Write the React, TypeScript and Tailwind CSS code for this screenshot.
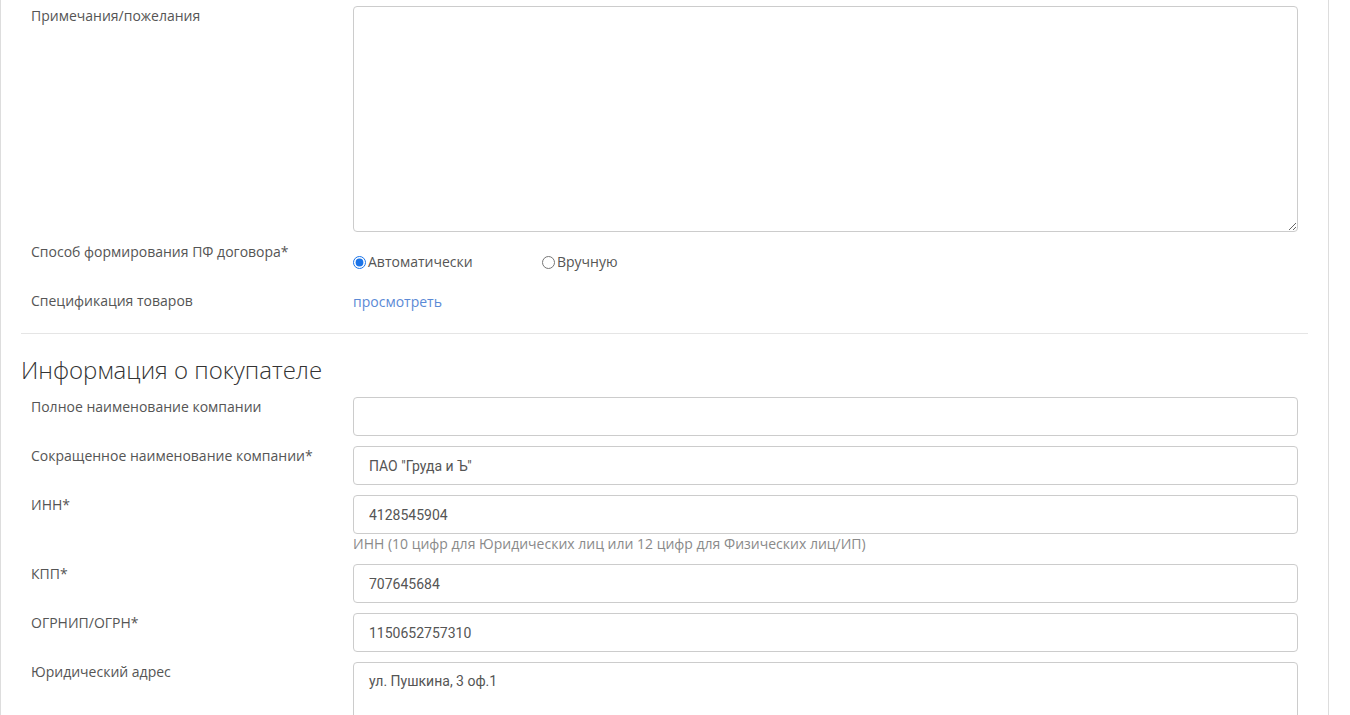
export default function App() {
  const label =
    "w-[312px] shrink-0 text-[14px] leading-[20px] text-[#555] font-['Open_Sans',sans-serif]"
  const input =
    "w-full h-[39px] rounded-[4px] border border-[#ccc] bg-white px-[15px] text-[14px] text-[#555] font-['Roboto',sans-serif] outline-none"

  const fields = [
    { name: "Сокращенное наименование компании*", value: 'ПАО "Груда и Ъ"' },
    {
      name: "ИНН*",
      value: "4128545904",
      help: "ИНН (10 цифр для Юридических лиц или 12 цифр для Физических лиц/ИП)",
    },
    { name: "КПП*", value: "707645684" },
    { name: "ОГРНИП/ОГРН*", value: "1150652757310" },
  ]

  return (
    <div className="min-h-screen bg-white overflow-hidden">
      <div className="w-[1329px] min-h-[715px] border-l border-r border-[#ddd] pl-[20px] pr-[20px] pt-[6px]">
        <div className="px-[10px]">
          {/* Notes */}
          <div className="flex gap-[10px] mb-[10px]">
            <div className={label}>Примечания/пожелания</div>
            <textarea
              className="flex-1 h-[226px] rounded-[4px] border border-[#ccc] bg-white px-[15px] py-[10px] text-[14px] text-[#555] font-['Roboto',sans-serif] outline-none"
              defaultValue=""
            />
          </div>

          {/* Radios */}
          <div className="flex gap-[10px] h-[40px] mb-[9px]">
            <div className={label}>Способ формирования ПФ договора*</div>
            <div className="flex pt-[10px] text-[14px] leading-[20px] text-[#555] font-['Open_Sans',sans-serif]">
              <label className="flex items-center w-[189px] h-[20px]">
                <input
                  type="radio"
                  name="pf"
                  defaultChecked
                  className="m-0 w-[13px] h-[13px] accent-[#1a73e8]"
                />
                <span className="ml-[2px]">Автоматически</span>
              </label>
              <label className="flex items-center h-[20px]">
                <input type="radio" name="pf" className="m-0 w-[13px] h-[13px]" />
                <span className="ml-[2px]">Вручную</span>
              </label>
            </div>
          </div>

          {/* Spec */}
          <div className="flex gap-[10px]">
            <div className={label}>Спецификация товаров</div>
            <a
              href="#"
              className="pt-[1px] text-[14px] leading-[20px] text-[#5b8ad6] font-['Open_Sans',sans-serif]"
            >
              просмотреть
            </a>
          </div>
        </div>

        <hr className="mt-[21px] border-t border-[#e5e5e5]" />

        <h2 className="mt-[23px] mb-[14px] text-[24px] leading-[26px] font-light text-[#333] font-['Open_Sans',sans-serif]">
          Информация о покупателе
        </h2>

        <div className="px-[10px]">
          <div className="flex gap-[10px] mb-[10px]">
            <div className={label}>Полное наименование компании</div>
            <div className="flex-1">
              <input className={input} defaultValue="" />
            </div>
          </div>

          {fields.map((f) => (
            <div key={f.name} className="flex gap-[10px] mb-[10px]">
              <div className={label}>{f.name}</div>
              <div className="flex-1">
                <input className={input} defaultValue={f.value} />
                {f.help && (
                  <div className="text-[14px] leading-[20px] text-[#8a8a8a] font-['Open_Sans',sans-serif]">
                    {f.help}
                  </div>
                )}
              </div>
            </div>
          ))}

          <div className="flex gap-[10px]">
            <div className={label}>Юридический адрес</div>
            <textarea
              className="flex-1 h-[100px] rounded-[4px] border border-[#ccc] bg-white px-[15px] py-[8px] text-[14px] leading-[20px] text-[#555] font-['Roboto',sans-serif] outline-none resize-none"
              defaultValue="ул. Пушкина, 3 оф.1"
            />
          </div>
        </div>
      </div>
    </div>
  )
}
